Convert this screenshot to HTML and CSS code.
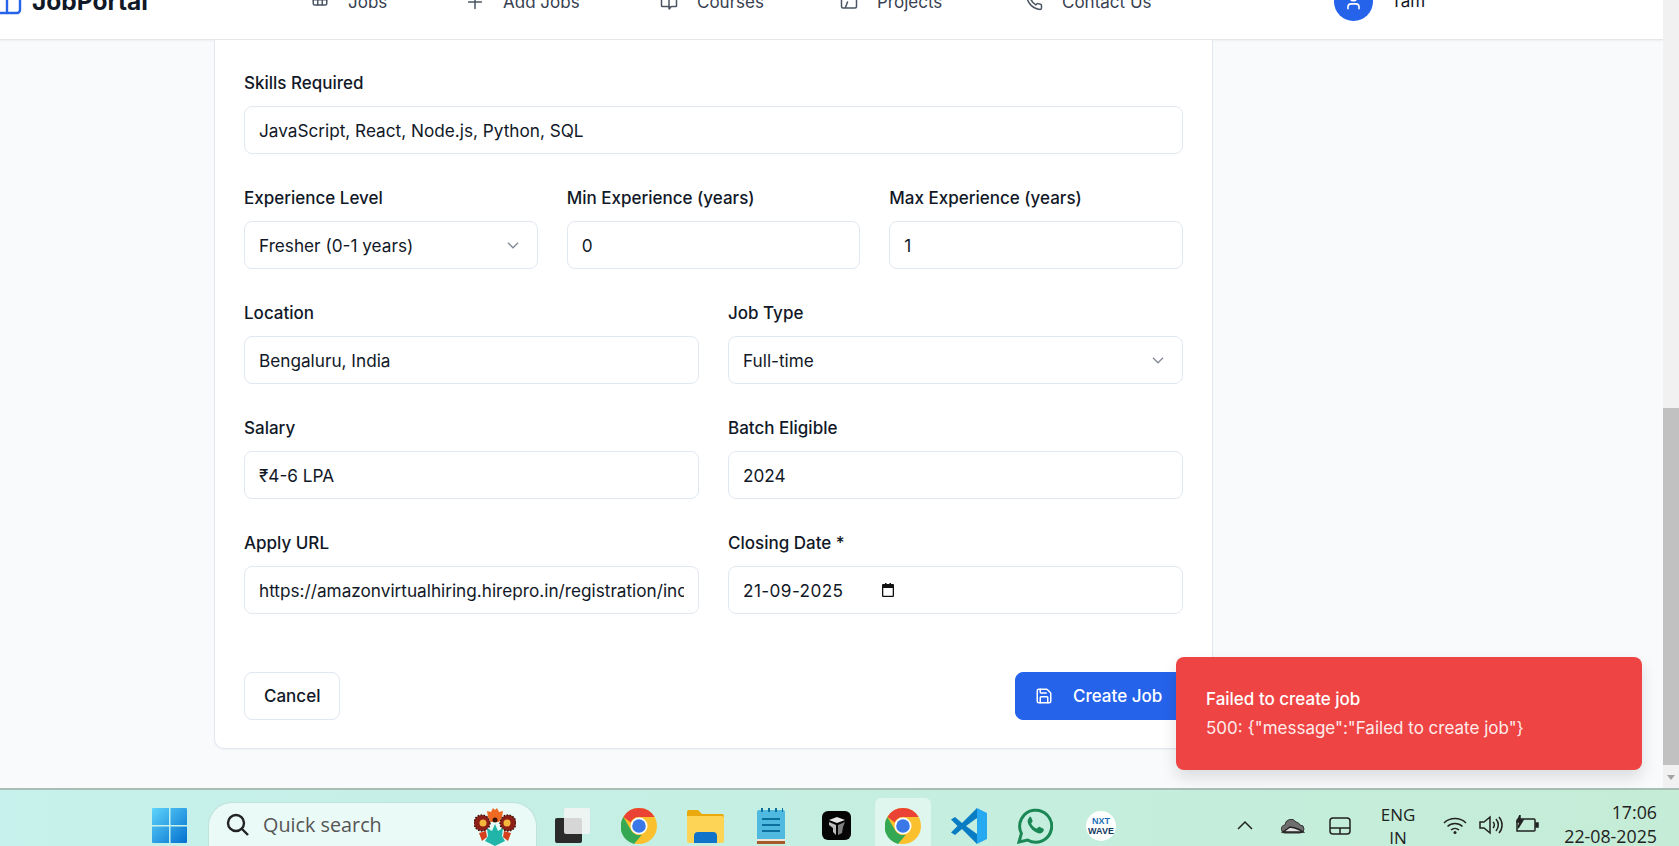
FILE: index.html
```html
<!DOCTYPE html>
<html lang="en">
<head>
    <meta charset="UTF-8">
    <title>JobPortal - Add Job</title>
    <link rel="stylesheet" href="styles.css">
</head>
<body>

<div class="screen">
    <div class="window">
        <div class="page">
            <header class="topbar">
                <div class="topbar-row">
                    <div class="logo">
                        <svg class="logo-icon" viewBox="0 0 24 24" fill="none" stroke="#2563eb" stroke-width="2.4"><rect x="-6" y="-3" width="26" height="24" rx="3"/><path d="M7 -4v25"/></svg>
                        <span>JobPortal</span>
                    </div>
                    <nav class="nav">
                        <a class="nav-jobs"><svg viewBox="0 0 24 24"><rect x="3" y="-4" width="18" height="20" rx="2"/><path d="M3 9h18M9 -4v20M15 -4v20"/></svg>Jobs</a>
                        <a class="nav-add"><svg viewBox="0 0 24 24"><path d="M12 3.500v17M3.500 12h17"/></svg>Add Jobs</a>
                        <a class="nav-courses"><svg viewBox="0 0 24 24"><path d="M12 7v14M3 18a1 1 0 0 1-1-1V4h6a4 4 0 0 1 4 4 4 4 0 0 1 4-4h6v13a1 1 0 0 1-1 1h-5a3 3 0 0 0-3 3 3 3 0 0 0-3-3z"/></svg>Courses</a>
                        <a class="nav-projects"><svg viewBox="0 0 24 24"><path d="M2 4v14a2 2 0 0 0 2 2h16a2 2 0 0 0 2-2V9a2 2 0 0 0-2-2h-8L9 3H4a2 2 0 0 0-2 1zM7 20l3-8"/></svg>Projects</a>
                        <a class="nav-contact"><svg viewBox="0 0 24 24"><path d="M22 17v3a2 2 0 0 1-2 2 19 19 0 0 1-8.600-3 19 19 0 0 1-6-6A19 19 0 0 1 2.400 4a2 2 0 0 1 2-2h3a2 2 0 0 1 2 1.700c.1 1 .4 1.900.7 2.800a2 2 0 0 1-.5 2.100L8.400 9.900a16 16 0 0 0 6 6l1.300-1.300a2 2 0 0 1 2.100-.4c.9.300 1.800.6 2.800.7a2 2 0 0 1 1.400 2.100z"/></svg>Contact Us</a>
                    </nav>
                    <div class="user">
                        <span class="avatar"><svg viewBox="0 0 24 24"><circle cx="12" cy="7" r="4"/><path d="M19 21v-2a4 4 0 0 0-4-4H9a4 4 0 0 0-4 4v2"/></svg></span>
                        <span>Tam</span>
                    </div>
                </div>
            </header>

            <main class="card">
                <div class="field">
                    <label>Skills Required</label>
                    <div class="input">JavaScript, React, Node.js, Python, SQL</div>
                </div>

                <div class="row row-3">
                    <div class="field">
                        <label>Experience Level</label>
                        <div class="input select">Fresher (0-1 years)<svg class="chev" viewBox="0 0 16 16"><path d="M3.500 6l4.500 4.500L12.500 6"/></svg></div>
                    </div>
                    <div class="field">
                        <label>Min Experience (years)</label>
                        <div class="input">0</div>
                    </div>
                    <div class="field">
                        <label>Max Experience (years)</label>
                        <div class="input">1</div>
                    </div>
                </div>

                <div class="row row-2">
                    <div class="field">
                        <label>Location</label>
                        <div class="input">Bengaluru, India</div>
                    </div>
                    <div class="field">
                        <label>Job Type</label>
                        <div class="input select">Full-time<svg class="chev" viewBox="0 0 16 16"><path d="M3.500 6l4.500 4.500L12.500 6"/></svg></div>
                    </div>
                </div>

                <div class="row row-2">
                    <div class="field">
                        <label>Salary</label>
                        <div class="input">₹4-6 LPA</div>
                    </div>
                    <div class="field">
                        <label>Batch Eligible</label>
                        <div class="input">2024</div>
                    </div>
                </div>

                <div class="row row-2">
                    <div class="field">
                        <label>Apply URL</label>
                        <div class="input"><span class="clip">https://amazonvirtualhiring.hirepro.in/registration/incture</span></div>
                    </div>
                    <div class="field">
                        <label>Closing Date *</label>
                        <div class="input date"><span class="date-text">21-09-2025</span><svg class="cal" viewBox="0 0 14 14"><path d="M2 1h2V0h1.500v1h3V0H10v1h2a1 1 0 0 1 1 1v11a1 1 0 0 1-1 1H2a1 1 0 0 1-1-1V2a1 1 0 0 1 1-1zm.3 4v7.700h9.400V5z"/></svg></div>
                    </div>
                </div>

                <div class="actions">
                    <button class="btn">Cancel</button>
                    <button class="btn btn-primary"><svg viewBox="0 0 24 24"><path d="M15.200 3a2 2 0 0 1 1.400.6l3.800 3.800a2 2 0 0 1 .6 1.400V19a2 2 0 0 1-2 2H5a2 2 0 0 1-2-2V5a2 2 0 0 1 2-2z"/><path d="M17 21v-7a1 1 0 0 0-1-1H8a1 1 0 0 0-1 1v7M7 3v4a1 1 0 0 0 1 1h7"/></svg>Create Job</button>
                </div>
            </main>
        </div>

        <div class="scrollbar">
            <div class="thumb"></div>
            <div class="arrow"></div>
        </div>

        <div class="toast">
            <div class="toast-title">Failed to create job</div>
            <div class="toast-msg">500: {"message":"Failed to create job"}</div>
        </div>
    </div>

    <footer class="taskbar">
        <svg class="tb-start" viewBox="0 0 35 35">
            <defs><linearGradient id="win" x1="0" y1="0" x2="1" y2="1"><stop offset="0" stop-color="#5fd4fb"/><stop offset="1" stop-color="#0270cf"/></linearGradient></defs>
            <path fill="url(#win)" d="M1 0h16v17H0V1a1 1 0 0 1 1-1zm17.500 0H34a1 1 0 0 1 1 1v16H18.500zM0 18.500h17V35H1a1 1 0 0 1-1-1zm18.500 0H35V34a1 1 0 0 1-1 1H18.500z"/>
        </svg>
        <div class="search">
            <svg class="search-icon" viewBox="0 0 24 24"><circle cx="10" cy="10" r="8"/><path d="M16 16l6 6"/></svg>
            <span>Quick search</span>
            <svg class="flower" viewBox="0 0 42 38">
                <circle cx="8" cy="15" r="8" fill="#8c1f17" stroke="#3a120c" stroke-width="1.500" stroke-dasharray="1.500 1.500"/>
                <circle cx="34" cy="15" r="8" fill="#8c1f17" stroke="#3a120c" stroke-width="1.500" stroke-dasharray="1.500 1.500"/>
                <circle cx="9" cy="15" r="3.500" fill="#f4b63c"/><circle cx="33" cy="15" r="3.500" fill="#f4b63c"/>
                <path fill="#ee6a22" d="M14 9l-1-6 4 1 2-4 2 2 2-2 2 4 4-1-1 6-3 5h-8z"/>
                <circle cx="21" cy="12" r="2.500" fill="#3a120c"/>
                <path fill="#d7401c" d="M5 25l7-2 1 6-5 4zM37 25l-7-2-1 6 5 4z"/>
                <path fill="#20b5a8" d="M21 16l3 7 5-3-1 8 3 5-10 5-10-5 3-5-1-8 5 3z"/>
            </svg>
        </div>
        <svg class="tb-taskview" viewBox="0 0 35 35">
            <rect x="0" y="10" width="27" height="25" rx="2" fill="#2a2a2a"/>
            <rect x="9" y="0" width="26" height="26" rx="2" fill="#f4f4f4" opacity=".85"/>
        </svg>
        <svg class="tb-chrome-a chrome" viewBox="0 0 36 36"><use href="#chrome"/></svg>
        <svg class="tb-folder" viewBox="0 0 37 33">
            <path fill="#e9a90d" d="M0 2a2 2 0 0 1 2-2h9l4 4h20a2 2 0 0 1 2 2v6H0z"/>
            <path fill="#fdd456" d="M0 6h35a2 2 0 0 1 2 2v23a2 2 0 0 1-2 2H2a2 2 0 0 1-2-2z"/>
            <path fill="#0f74c9" d="M7 33v-7a4 4 0 0 1 4-4h15a4 4 0 0 1 4 4v7z"/>
        </svg>
        <svg class="tb-notes" viewBox="0 0 28 36">
            <path fill="#4fb9e0" d="M2 2h24a2 2 0 0 1 2 2v28H0V4a2 2 0 0 1 2-2z"/>
            <path fill="#a65a28" d="M0 32h28v4H0z"/><path fill="#f1e4d8" d="M0 31h28v2H0z"/>
            <path stroke="#0a6f9c" stroke-width="2" d="M5 11h18M5 17h18M5 23h18"/>
            <path stroke="#0a6f9c" stroke-width="4" stroke-dasharray="2 5" d="M4 2h22"/>
        </svg>
        <svg class="tb-black" viewBox="0 0 29 29">
            <rect width="29" height="29" rx="6" fill="#050505"/>
            <path fill="#e6e6e6" d="M7 9l8-3 8 3-8 3z"/>
            <path fill="#bdbdbd" d="M7 11l7 3v10l-3-3v-4l-4-3z"/>
            <path fill="#808080" d="M23 11l-7 3v10l4-2 1-6z"/>
        </svg>
        <div class="tb-active">
            <svg class="chrome" viewBox="0 0 36 36">
                <g id="chrome">
                    <circle cx="18" cy="18" r="18" fill="#fbc02d"/>
                    <path fill="#ea4335" d="M18 0a18 18 0 0 1 15.600 9H18a9 9 0 0 0-8.300 5.500L2.400 9A18 18 0 0 1 18 0z"/>
                    <path fill="#34a853" d="M2.400 9l7.800 13.500A9 9 0 0 0 21 26.500L13 36A18 18 0 0 1 2.400 9z"/>
                    <circle cx="18" cy="18" r="8.500" fill="#fff"/>
                    <circle cx="18" cy="18" r="6.800" fill="#3b78e7"/>
                </g>
            </svg>
        </div>
        <svg class="tb-code" viewBox="0 0 36 36">
            <path fill="#0a7cc4" fill-rule="evenodd" d="M26 0L11 15 4 9 0 11.500 6.500 18 0 24.500 4 27l7-6 15 15zm0 10v16l-11-8z"/>
            <path fill="#27a9f1" d="M26 0l10 5v26l-10 5z"/>
        </svg>
        <svg class="tb-whatsapp" viewBox="0 0 36 36" fill="none">
            <path stroke="#1a8754" stroke-width="3" d="M2 34l2.400-8.600A16 16 0 1 1 10.600 32z"/>
            <path fill="#1a8754" d="M12.500 9.500c-2 1.500-2.500 4-1 7 2 4 5 7 9 8.500 3 1 5 0 6-2 .5-1 .5-2-.5-2.500l-3-1.500c-1-.4-1.600 0-2.200.8-.6.8-1 1-1.900.5-2-1-3.500-2.500-4.500-4.300-.4-.8 0-1.200.6-1.800.6-.7.800-1.200.4-2l-1.300-3c-.4-.9-1.500-.4-2.100-.2z"/>
        </svg>
        <div class="tb-nxt"><span class="nxt-top">NXT</span><span>WAVE</span></div>

        <div class="tray">
            <svg class="tray-chev" viewBox="0 0 16 10"><path d="M1 9l7-7 7 7"/></svg>
            <svg class="tray-cloud" viewBox="0 0 24 17"><path fill="#6f6f6f" stroke="#333" stroke-width="1" d="M5 16a4 4 0 0 1-1-8 6 6 0 0 1 11-3 5 5 0 0 1 4 3 4 4 0 0 1 0 8z"/><path fill="#e2e2e2" d="M2 15l7-5 5 1 5 2 3 2z"/></svg>
            <svg class="tray-pad" viewBox="0 0 22 18"><rect x="1" y="1" width="20" height="16" rx="3"/><path d="M1 11h20M11 11v6"/></svg>
            <div class="lang"><span>ENG</span><span>IN</span></div>
            <svg class="tray-wifi" viewBox="0 0 24 17"><path d="M1 6a16 16 0 0 1 22 0M4.500 9.500a11 11 0 0 1 15 0M8 13a6 6 0 0 1 8 0"/><circle cx="12" cy="15.500" r="1.500" fill="#222" stroke="none"/></svg>
            <svg class="tray-vol" viewBox="0 0 24 20"><path d="M1 7h4l6-5v16l-6-5H1zM14 7a4 4 0 0 1 0 6M17 4a9 9 0 0 1 0 12M20 2a12 12 0 0 1 0 16"/></svg>
            <svg class="tray-batt" viewBox="0 0 24 20"><path d="M5 4h14a1 1 0 0 1 1 1v10a1 1 0 0 1-1 1H2V6a2 2 0 0 1 2-2z"/><path fill="#222" d="M21 8h2v4h-2zM5 0L2 7h3l-2 6 5-8H5z"/></svg>
            <div class="clock"><span>17:06</span><span>22-08-2025</span></div>
        </div>
    </footer>
</div>

</body>
</html>
```

FILE: styles.css
```css
* { box-sizing: border-box; }
html, body { margin: 0; height: 100%; overflow: hidden; }
body {
    font-family: Inter, 'Liberation Sans', sans-serif;
    color: #111827;
    background: #f8fafc;
}
.screen { display: flex; flex-direction: column; height: 846px; }
.window { position: relative; display: flex; height: 788px; }
.page { flex: 1; min-width: 0; background: #f8fafc; }

/* top bar, scrolled so only its lower half shows */
.topbar {
    height: 40px;
    overflow: hidden;
    background: #fff;
    border-bottom: 1px solid #e5e7eb;
    box-shadow: 0 1px 2px rgba(0,0,0,0.05);
}
.topbar-row { display: flex; align-items: center; height: 40px; margin-top: -19px; }
.logo { display: flex; align-items: center; font-size: 24.500px; font-weight: 700; width: 311px; }
.logo-icon { width: 24px; height: 24px; margin: 5px 8px 0 0; }
.nav { display: flex; flex: none; margin-top: 1px; font-size: 17px; color: #374151; }
.nav a { display: flex; align-items: center; }
.nav svg, .avatar svg, .btn svg {
    fill: none;
    stroke: currentColor;
    stroke-width: 2;
    stroke-linecap: round;
    stroke-linejoin: round;
}
.nav svg { width: 18px; height: 18px; margin-right: 19px; stroke: #4b5563; }
.nav-jobs { width: 155px; }
.nav-add { width: 194px; }
.nav-courses { width: 180px; }
.nav-projects { width: 185px; }
.nav-contact { width: 309px; }
.user { display: flex; align-items: center; gap: 18px; font-size: 17px; }
.avatar {
    display: flex;
    align-items: center;
    justify-content: center;
    width: 39px;
    height: 39px;
    border-radius: 50%;
    background: #2563eb;
    color: #fff;
}
.avatar svg { width: 19px; height: 19px; }

/* form card */
.card {
    width: 999px;
    margin-left: 214px;
    height: 709px;
    padding: 30px 29px 0;
    background: #fff;
    border: 1px solid #e2e8f0;
    border-top: none;
    border-radius: 0 0 10px 10px;
    box-shadow: 0 1px 2px rgba(0,0,0,0.04);
}
.field { min-width: 0; }
.field label { display: block; height: 24px; line-height: 26px; font-size: 17px; font-weight: 450; margin-bottom: 12px; }
.input {
    display: flex;
    align-items: center;
    height: 48px;
    padding: 0 14px;
    border: 1px solid #e2e8f0;
    border-radius: 8px;
    font-size: 17.200px;
    background: #fff;
}
.select { justify-content: space-between; }
.chev { width: 18px; height: 18px; margin-right: 1px; fill: none; stroke: #858b96; stroke-width: 1.200; }
.clip { overflow: hidden; white-space: nowrap; }
.date-text { letter-spacing: 0.4px; width: 138px; }
.cal { width: 14px; height: 14px; fill: #111; }
.row { display: grid; gap: 29px; margin-top: 31px; }
.row-3 { grid-template-columns: repeat(3, 1fr); }
.row-2 { grid-template-columns: repeat(2, 1fr); }
.actions { display: flex; justify-content: space-between; margin-top: 58px; }
.btn {
    display: flex;
    align-items: center;
    height: 48px;
    padding: 0 19px;
    font: 450 17px Inter, 'Liberation Sans', sans-serif;
    color: #111827;
    background: #fff;
    border: 1px solid #e2e8f0;
    border-radius: 8px;
}
.btn-primary { width: 168px; color: #fff; background: #2563eb; border-color: #2563eb; }
.btn-primary svg { width: 18px; height: 18px; margin-right: 20px; flex: none; }

/* scrollbar */
.scrollbar { position: relative; width: 16px; background: #f1f1f1; }
.thumb { position: absolute; top: 408px; bottom: 23px; left: 0; right: 0; background: #c1c1c1; }
.arrow {
    position: absolute;
    bottom: 8px;
    left: 4px;
    border-left: 4px solid transparent;
    border-right: 4px solid transparent;
    border-top: 5px solid #a3a3a3;
}

/* toast */
.toast {
    position: absolute;
    left: 1176px;
    top: 657px;
    width: 466px;
    height: 113px;
    padding: 30px;
    background: #ef4444;
    color: #fff;
    border-radius: 8px;
    box-shadow: 0 8px 16px rgba(0,0,0,0.12);
    font-size: 17px;
}
.toast-title { font-weight: 500; line-height: 24px; }
.toast-msg { line-height: 24px; margin-top: 5px; opacity: 0.9; }

/* windows taskbar */
.taskbar {
    display: flex;
    align-items: flex-start;
    height: 58px;
    padding-left: 152px;
    border-top: 2px solid #a8bdb3;
    background: linear-gradient(90deg, #c6f1ec, #c4ecd6);
    font-family: 'Open Sans', 'Noto Sans', sans-serif;
    color: #222;
}
.taskbar > svg { flex: none; margin-top: 18px; }
.tb-start { width: 35px; height: 35px; }
.search {
    display: flex;
    align-items: center;
    width: 329px;
    height: 46px;
    margin: 12px 0 0 21px;
    padding: 0 20px 2px 17px;
    border: 1px solid #bfe3dc;
    border-bottom: none;
    border-radius: 24px 24px 0 0;
    background: #eafaf6;
    font-size: 19.800px;
    color: #555;
}
.search-icon { width: 24px; height: 24px; margin-right: 13px; fill: none; stroke: #222; stroke-width: 2.400; }
.flower { width: 42px; height: 38px; margin-left: auto; margin-top: 4px; }
.taskbar > .tb-taskview { width: 35px; height: 35px; margin-left: 18px; }
.taskbar > .tb-chrome-a { margin-left: 31px; }
.chrome { width: 36px; height: 36px; }
.taskbar > .tb-folder { width: 37px; height: 33px; margin-left: 30px; margin-top: 20px; }
.taskbar > .tb-notes { width: 28px; height: 36px; margin-left: 33px; }
.taskbar > .tb-black { width: 29px; height: 29px; margin-left: 37px; margin-top: 21px; }
.tb-active {
    flex: none;
    display: flex;
    justify-content: center;
    width: 56px;
    height: 50px;
    margin: 8px 0 0 24px;
    padding-top: 10px;
    border-radius: 6px 6px 0 0;
    background: rgba(255,255,255,0.45);
}
.taskbar > .tb-code { width: 36px; height: 36px; margin-left: 20px; }
.taskbar > .tb-whatsapp { width: 36px; height: 36px; margin-left: 30px; }
.tb-nxt {
    flex: none;
    display: flex;
    flex-direction: column;
    align-items: center;
    justify-content: center;
    width: 30px;
    height: 30px;
    margin: 21px 0 0 33px;
    border-radius: 50%;
    background: #fff;
    font: 700 9px/10px 'Liberation Sans', sans-serif;
    color: #12395f;
}
.nxt-top { color: #1c6fb8; }
.tray { display: flex; align-items: flex-start; margin-left: 121px; }
.tray svg { flex: none; fill: none; stroke: #222; stroke-width: 1.500; }
.tray-chev { width: 16px; height: 10px; margin-top: 30px; }
.tray-cloud { width: 24px; height: 17px; margin: 27px 0 0 28px; }
.tray-pad { width: 22px; height: 18px; margin: 27px 0 0 24px; }
.lang { display: flex; flex-direction: column; align-items: center; width: 36px; margin: 13px 0 0 29px; font-size: 17px; line-height: 23px; }
.tray-wifi { width: 24px; height: 17px; margin: 27px 0 0 27px; }
.tray-vol { width: 24px; height: 20px; margin: 25px 0 0 12px; }
.tray-batt { width: 24px; height: 20px; margin: 25px 0 0 12px; }
.clock { display: flex; flex-direction: column; align-items: flex-end; width: 92px; margin: 10px 0 0 26px; font-size: 17.800px; line-height: 24px; white-space: nowrap; }
```
